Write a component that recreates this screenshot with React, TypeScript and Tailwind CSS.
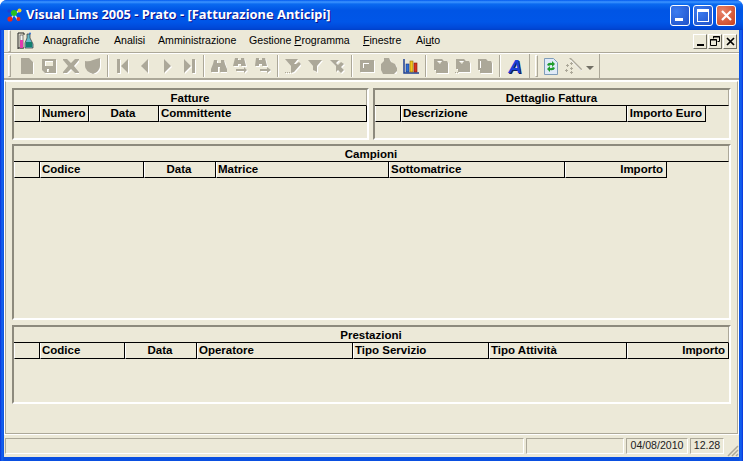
const GRAY = "#aca899";

type Col = { label: string; w: string; align?: string };

const fattureCols: Col[] = [
  { label: "", w: "w-[26px]" },
  { label: "Numero", w: "w-[49px]" },
  { label: "Data", w: "w-[70px]", align: "justify-center" },
  { label: "Committente", w: "flex-1" },
];
const dettaglioCols: Col[] = [
  { label: "", w: "w-[26px]" },
  { label: "Descrizione", w: "w-[226px]" },
  { label: "Importo Euro", w: "w-[79px]", align: "justify-end" },
];
const campioniCols: Col[] = [
  { label: "", w: "w-[26px]" },
  { label: "Codice", w: "w-[104px]" },
  { label: "Data", w: "w-[72px]", align: "justify-center" },
  { label: "Matrice", w: "w-[173px]" },
  { label: "Sottomatrice", w: "w-[176px]" },
  { label: "Importo", w: "w-[102px]", align: "justify-end" },
];
const prestazioniCols: Col[] = [
  { label: "", w: "w-[26px]" },
  { label: "Codice", w: "w-[85px]" },
  { label: "Data", w: "w-[72px]", align: "justify-center" },
  { label: "Operatore", w: "w-[156px]" },
  { label: "Tipo Servizio", w: "w-[136px]" },
  { label: "Tipo Attività", w: "w-[138px]" },
  { label: "Importo", w: "w-[102px]", align: "justify-end" },
];

// grey disabled toolbar glyph with the white emboss under it
const Dis = ({ d }: { d: string }) => (
  <svg width="16" height="16" viewBox="0 0 16 16" fillRule="evenodd">
    <path d={d} fill="#ffffff" transform="translate(1 1)" />
    <path d={d} fill={GRAY} />
  </svg>
);

const icons = {
  doc: "M2 0h8l4 4v12H2z",
  save: "M1 1h14v14H4l-3-3zM4 3v5h8V3zM6 11v3h2v-3z",
  cross: "M0 1h4l4 4 4-4h4v1l-5 6 5 6v1h-4l-4-4-4 4H0v-1l5-6-5-6z",
  shield: "M0 3q4 1 8-1 3-1 7-2v8q0 5-7 8-8-3-8-8z",
  first: "M2 1h3v14H2zM13 1v14L6 8z",
  prev: "M11 1v14L4 8z",
  next: "M5 1v14l7-7z",
  last: "M3 1l7 7-7 7zM11 1h3v14h-3z",
  binoc: "M3 2h3v3h4V2h3l1 4 2 5v3H9V9H7v5H0v-3l2-5z",
  binocSwap: "M2 0h3v2h3V0h3l2 8H8V6H5v2H0zM3 11h8V9l3 3-3 3v-2H3z",
  binocNext: "M1 0h3v2h3V0h3l2 8H7V6H4v2H0zM5 11h7V9l4 3-4 3v-2H5z",
  filterEdit: "M0 1h13l-4 5 2 0 3-2 2 2-7 8-3 1V8zM0 14h1v1H0zM2 14h1v1H2zM4 14h1v1H4z",
  filter: "M1 2h14l-5 6v6l-4-2V8z",
  filterOff: "M1 2h9l-3 3 2 2 3-3 3 2-3 3 3 3-3 3-3-3-2 2V8z",
  form: "M1 2h14v12H1zM4 5v1h6V5zM4 6v4h1V6z",
  blob: "M3 0h5l2 4 4 2 2 4v3l-3 3H2L0 12V6l3-3z",
  copy: "M1 1h8l2 2h3l1 2v10H3v-3H1zM4 3l3 3 2-3z",
  copyDots: "M1 1h8l2 2h3l1 2v9H3v-3H1zM4 3l3 3 2-3zM0 14h1v1H0zM2 14h1v1H2z",
  paste: "M1 1h8l2 2h3l1 2v10H3v-3H1zM3 3v7h1V3z",
};

const ToolBtn = ({ children }: { children: React.ReactNode }) => (
  <div className="flex w-[22px] items-center justify-center">{children}</div>
);

const Sep = () => (
  <div className="mx-[3px] h-[22px] w-[2px] border-l border-r border-l-[#aca899] border-r-white" />
);

const Grip = () => (
  <div className="h-[22px] w-[3px] border border-[#aca899] border-l-white border-t-white" />
);

const Chart = () => (
  <svg width="17" height="17" viewBox="0 0 17 17">
    <path d="M1 1v14h15" fill="none" stroke="#1c3f94" strokeWidth="1.5" />
    <rect x="3" y="6" width="3" height="8" fill="#2f6fd6" stroke="#14307a" strokeWidth=".6" />
    <rect x="7" y="3" width="3" height="11" fill="#f2c41d" stroke="#8a6a0a" strokeWidth=".6" />
    <rect x="11" y="5" width="3" height="9" fill="#d8321e" stroke="#7a180e" strokeWidth=".6" />
  </svg>
);

const Refresh = () => (
  <svg width="14" height="17" viewBox="0 0 14 17">
    <path d="M.5.5h9l4 4v12H.5z" fill="#dfeaf8" stroke="#7f9db9" />
    <path d="M3 7q1-3 5-2V3l3 3-3 3V7q-2-.5-3 1z" fill="#1f9d2d" />
    <path d="M11 10q-1 3-5 2v2l-3-3 3-3v2q2 .5 3-1z" fill="#1f9d2d" />
  </svg>
);

const Wand = () => (
  <svg width="18" height="18" viewBox="0 0 18 18" fill={GRAY}>
    <path d="M5 1h2l11 11-1 2z" />
    <path d="M6 2h1l11 11h-1z" fill="#ffffff" transform="translate(0 1)" />
    <path d="M7 5h1v1h1v1H8v1H7V7H6V6h1zM3 7h1v1h1v1H4v1H3V9H2V8h1zM7 10h1v1h1v1H8v1H7v-1H6v-1h1zM2 12h1v1h1v1H3v1H2v-1H1v-1h1zM7 14h1v1h1v1H8v1H7v-1H6v-1h1z" />
  </svg>
);

const Molecule = () => (
  <svg width="15" height="15" viewBox="0 0 15 15">
    <path d="M4 11 7 6l5-3M7 6l4 6" stroke="#d8e4f8" strokeWidth="1.5" fill="none" />
    <circle cx="7" cy="5" r="3" fill="#27c020" />
    <circle cx="3" cy="11" r="2.6" fill="#e8261c" />
    <circle cx="11.5" cy="11" r="2" fill="#e8261c" />
    <circle cx="12.5" cy="2.5" r="2" fill="#f2d21c" />
    <circle cx="2" cy="3" r="1.6" fill="#1c3fd0" />
  </svg>
);

const Flasks = () => (
  <svg width="17" height="18" viewBox="0 0 17 18">
    <path d="M1 1v16M1 1h6M1 16h6M7 1v2" stroke="#222" fill="none" />
    <rect x="3" y="3" width="3" height="13" fill="#f4f4f4" stroke="#333" strokeWidth=".6" />
    <rect x="3" y="8" width="3" height="8" fill="#e23ab0" />
    <path d="M10 2h3v4l3 6v4H8v-5l2-5z" fill="#66b8c8" stroke="#333" strokeWidth=".7" />
    <path d="M9 10h6v5H9z" fill="#12806e" />
    <circle cx="13" cy="1.5" r="1" fill="#2f6fd6" />
  </svg>
);

const Grid = ({ title, cols, className }: { title: string; cols: Col[]; className: string }) => (
  <div className={`border-2 border-l-[#8d8a7d] border-t-[#8d8a7d] border-r-white border-b-white ${className}`}>
    <div className="flex h-[16px] items-center justify-center border-r border-b border-r-[#aca899] border-b-black pt-[2px] text-[11.5px] font-bold text-black">
      {title}
    </div>
    <div className="flex">
      {cols.map((c, i) => (
        <div
          key={i}
          className={`flex h-[16px] items-center border-r border-b border-l border-r-black border-b-black border-l-white pt-px pr-[3px] pl-[1px] text-[11.5px] font-bold whitespace-nowrap text-black ${c.w} ${c.align ?? ""}`}
        >
          {c.label}
        </div>
      ))}
    </div>
  </div>
);

const Raised = ({ children }: { children: React.ReactNode }) => (
  <div className="flex h-[15px] w-[14px] items-center justify-center border border-l-white border-t-white border-r-[#716f64] border-b-[#716f64] bg-[#ece9d8]">
    {children}
  </div>
);

const Pane = ({ className, children }: { className: string; children?: React.ReactNode }) => (
  <div className={`flex h-[16px] items-center border border-l-[#aca899] border-t-[#aca899] border-r-white border-b-white text-[10.6px] text-[#222222] ${className}`}>
    {children}
  </div>
);

export default function App() {
  return (
    <div
      className="flex h-[461px] w-[743px] flex-col overflow-hidden rounded-t-[7px] bg-[linear-gradient(90deg,#0831d9,#1464f0_2px,#0a4fe0_4px,#0a4fe0_739px,#1464f0_741px,#0831d9)] px-[4px] pb-[4px] text-black"
      style={{ fontFamily: '"Liberation Sans", Arial, sans-serif' }}
    >
      {/* title bar */}
      <div className="-mx-[4px] flex h-[30px] shrink-0 items-center bg-[linear-gradient(180deg,#0058ee_0,#3d95ff_2px,#0a6af0_4px,#0055e5_10px,#0056e8_22px,#0048d8_28px,#0040c8_30px)] pl-[7px] pr-[7px]">
        <Molecule />
        <span
          className="ml-[4px] text-[12.9px] font-bold whitespace-nowrap text-white [text-shadow:1px_1px_#0f1089]"
          style={{ fontFamily: '"Noto Sans", sans-serif' }}
        >
          Visual Lims 2005 - Prato - [Fatturazione Anticipi]
        </span>
        <div className="ml-auto flex items-center gap-[3px]">
          <div className="flex h-[21px] w-[20px] items-end rounded-[3px] border border-white bg-[radial-gradient(circle_at_30%_30%,#3c7cf0,#1f50c8)] p-[4px]">
            <div className="h-[3px] w-[8px] bg-white" />
          </div>
          <div className="flex h-[21px] w-[20px] items-center justify-center rounded-[3px] border border-white bg-[radial-gradient(circle_at_30%_30%,#3c7cf0,#1f50c8)]">
            <div className="h-[13px] w-[12px] border border-t-[3px] border-white" />
          </div>
          <div className="flex h-[21px] w-[20px] items-center justify-center rounded-[3px] border border-white bg-[radial-gradient(circle_at_30%_30%,#e8846a,#c8401c)]">
            <svg width="13" height="13" viewBox="0 0 13 13">
              <path d="M2 2l9 9M11 2l-9 9" stroke="#ffffff" strokeWidth="2.2" />
            </svg>
          </div>
        </div>
      </div>

      {/* menu bar */}
      <div className="flex h-[23px] shrink-0 items-center border-b border-[#aca899] bg-[#ece9d8] pl-[4px] text-[10.6px]">
        <Grip />
        <div className="ml-[6px] w-[26px]">
          <Flasks />
        </div>
        <span className="w-[71px]">Anagrafiche</span>
        <span className="w-[44px]">Analisi</span>
        <span className="w-[91px]">Amministrazione</span>
        <span className="w-[114px]">
          Gestione <span className="underline">P</span>rogramma
        </span>
        <span className="w-[53px]">
          <span className="underline">F</span>inestre
        </span>
        <span>
          Ai<span className="underline">u</span>to
        </span>
        <div className="mr-[2px] ml-auto flex gap-[1px]">
          <Raised>
            <div className="mt-[7px] h-[2px] w-[7px] bg-black" />
          </Raised>
          <Raised>
            <svg width="10" height="10" viewBox="0 0 10 10">
              <path d="M3.5 2.5V.5h6v5h-2M.5 3.5h6v6h-6z" fill="none" stroke="#000000" />
              <path d="M3 1h7M0 4h7" stroke="#000000" />
            </svg>
          </Raised>
          <Raised>
            <svg width="9" height="9" viewBox="0 0 9 9">
              <path d="M1 1l7 7M8 1L1 8" stroke="#000000" strokeWidth="1.7" />
            </svg>
          </Raised>
        </div>
      </div>

      {/* toolbar */}
      <div className="flex h-[27px] shrink-0 items-center border-t border-b-2 border-t-white border-b-[#aca899] bg-[#ece9d8] pl-[4px]">
        <Grip />
        <div className="ml-[5px] flex items-center">
          <ToolBtn><Dis d={icons.doc} /></ToolBtn>
          <ToolBtn><Dis d={icons.save} /></ToolBtn>
          <ToolBtn><Dis d={icons.cross} /></ToolBtn>
          <ToolBtn><Dis d={icons.shield} /></ToolBtn>
          <Sep />
          <ToolBtn><Dis d={icons.first} /></ToolBtn>
          <ToolBtn><Dis d={icons.prev} /></ToolBtn>
          <ToolBtn><Dis d={icons.next} /></ToolBtn>
          <ToolBtn><Dis d={icons.last} /></ToolBtn>
          <Sep />
          <ToolBtn><Dis d={icons.binoc} /></ToolBtn>
          <ToolBtn><Dis d={icons.binocSwap} /></ToolBtn>
          <ToolBtn><Dis d={icons.binocNext} /></ToolBtn>
          <Sep />
          <ToolBtn><Dis d={icons.filterEdit} /></ToolBtn>
          <ToolBtn><Dis d={icons.filter} /></ToolBtn>
          <ToolBtn><Dis d={icons.filterOff} /></ToolBtn>
          <Sep />
          <ToolBtn><Dis d={icons.form} /></ToolBtn>
          <ToolBtn><Dis d={icons.blob} /></ToolBtn>
          <ToolBtn><Chart /></ToolBtn>
          <Sep />
          <ToolBtn><Dis d={icons.copy} /></ToolBtn>
          <ToolBtn><Dis d={icons.copyDots} /></ToolBtn>
          <ToolBtn><Dis d={icons.paste} /></ToolBtn>
          <Sep />
          <ToolBtn>
            <span className="text-[19px] leading-none font-bold text-[#1b3fd8] italic [text-shadow:1px_1px_#10205a]">
              A
            </span>
          </ToolBtn>
        </div>
        <div className="ml-[2px] flex h-full items-center border-r border-r-[#aca899] pr-[1px]" />
        <div className="ml-[5px]">
          <Grip />
        </div>
        <div className="ml-[2px] flex items-center">
          <ToolBtn><Refresh /></ToolBtn>
          <ToolBtn><Wand /></ToolBtn>
          <div className="mt-[4px] ml-[2px] h-0 w-0 border-x-[4px] border-t-[4px] border-x-transparent border-t-[#716f64]" />
        </div>
        <div className="ml-[5px] h-full border-r border-r-[#aca899]" />
      </div>

      {/* mdi child */}
      <div className="flex-1 border-t border-l border-r border-t-white border-l-white border-r-white border-b-white bg-[#ece9d8]">
        <div className="flex h-full flex-col border border-[#aca899] border-t-white pt-[6px] pr-[6px] pl-[6px]">
          <div className="flex gap-[4px]">
            <Grid title="Fatture" cols={fattureCols} className="h-[52px] w-[357px]" />
            <Grid title="Dettaglio Fattura" cols={dettaglioCols} className="h-[52px] flex-1" />
          </div>
          <Grid title="Campioni" cols={campioniCols} className="mt-[4px] h-[176px]" />
          <Grid title="Prestazioni" cols={prestazioniCols} className="mt-[5px] h-[79px]" />
        </div>
      </div>

      {/* status bar */}
      <div className="relative flex h-[23px] shrink-0 items-center gap-[2px] border-t border-t-white bg-[#ece9d8] pl-[1px]">
        <Pane className="w-[519px]" />
        <Pane className="w-[98px]" />
        <Pane className="w-[62px] justify-center">04/08/2010</Pane>
        <Pane className="w-[34px] justify-center">12.28</Pane>
        <svg className="absolute right-0 bottom-0" width="12" height="12" viewBox="0 0 12 12">
          <path d="M11 1L1 11M11 5l-6 6M11 9l-2 2" stroke="#aca899" strokeWidth="1.5" />
        </svg>
      </div>
    </div>
  );
}
